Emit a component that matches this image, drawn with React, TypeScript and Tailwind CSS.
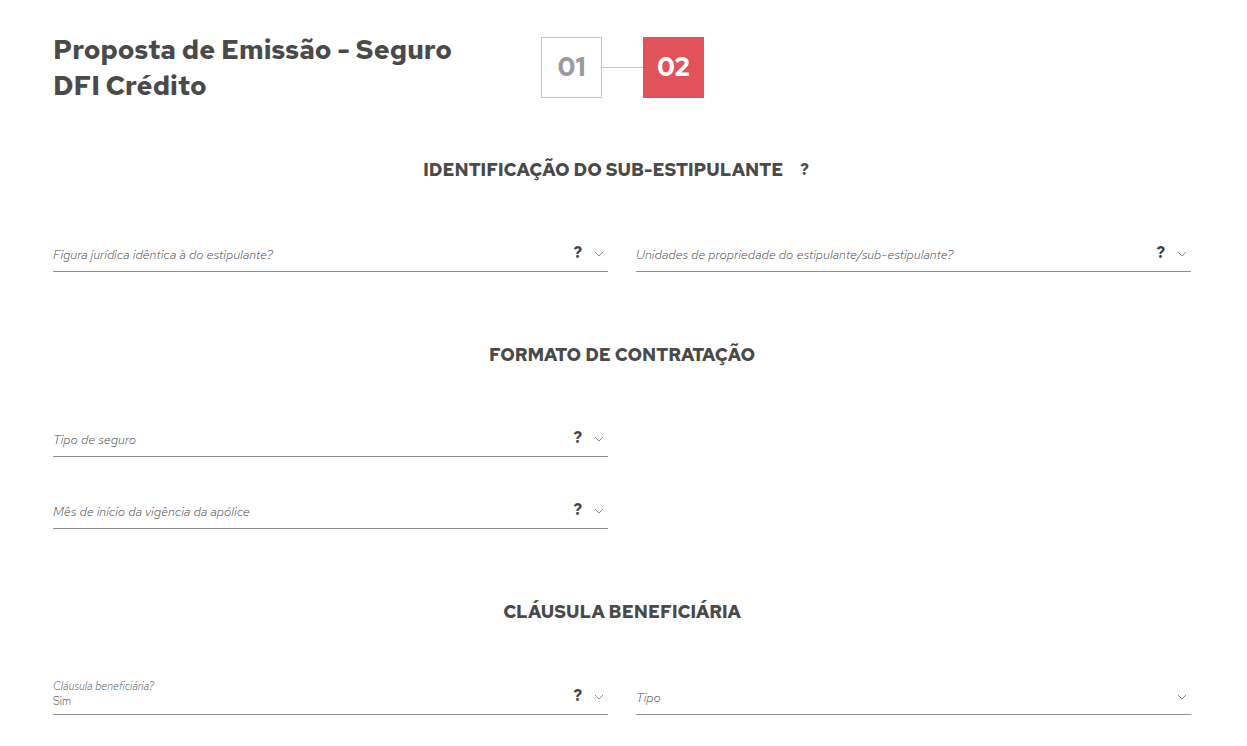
import React from "react";

const Chevron = () => (
  <svg width="10" height="6" viewBox="0 0 10 6" fill="none">
    <path d="M1 1l4 4 4-4" stroke="#888" strokeWidth="1" />
  </svg>
);

function Field({
  label,
  help = true,
  small,
  value,
}: {
  label: string;
  help?: boolean;
  small?: boolean;
  value?: string;
}) {
  return (
    <div className="flex h-[40px] items-end border-b border-[#8f8f8f]">
      <div className="flex h-[18px] w-full items-center mb-[8px]">
        <div className="flex-1 min-w-0">
          {small ? (
            <div className="flex flex-col -translate-y-[3px]">
              <span className="text-[11px] italic font-light leading-[12px] text-[#555]">{label}</span>
              <span className="text-[11px] font-light leading-[14px] text-[#444] mt-[2px]">{value}</span>
            </div>
          ) : (
            <span className="text-[13px] italic font-light leading-[18px] text-[#4a4a4a]">{label}</span>
          )}
        </div>
        <div className="flex items-center gap-[12px] pr-[4px]">
          {help && (
            <span className="text-[16px] font-bold text-[#444] leading-[18px] -translate-y-[1px]">?</span>
          )}
          <Chevron />
        </div>
      </div>
    </div>
  );
}

function Heading({ children, help }: { children: React.ReactNode; help?: boolean }) {
  return (
    <div className="flex justify-center items-center h-[24px]">
      <h2 className="text-[18px] font-extrabold text-[#4a4a4a] leading-[24px] uppercase">{children}</h2>
      {help && <span className="ml-[17px] mr-[12px] text-[16px] font-extrabold text-[#4a4a4a]">?</span>}
    </div>
  );
}

export default function App() {
  return (
    <div
      className="min-h-[746px] bg-white pl-[53px] pr-[56px] pt-[32px]"
      style={{ fontFamily: "'Red Hat Text', Lato, 'Noto Sans', sans-serif" }}
    >
      <div className="flex items-start">
        <h1 className="w-[488px] text-[27px] font-extrabold leading-[36px] text-[#4a4a4a]">
          Proposta de Emissão - Seguro
          <br />
          DFI Crédito
        </h1>
        <div className="flex items-center mt-[5px]">
          <div className="flex h-[61px] w-[61px] items-center justify-center border border-[#c4c4c4] text-[26px] font-extrabold text-[#9a9a9a]">
            01
          </div>
          <div className="h-[1px] w-[41px] bg-[#c4c4c4]" />
          <div className="flex h-[61px] w-[61px] items-center justify-center bg-[#e2525a] text-[26px] font-extrabold text-white">
            02
          </div>
        </div>
      </div>

      <div className="mt-[54px]">
        <Heading help>IDENTIFICAÇÃO DO SUB-ESTIPULANTE</Heading>
      </div>
      <div className="mt-[50px] grid grid-cols-2 gap-x-[28px]">
        <Field label="Figura jurídica idêntica à do estipulante?" />
        <Field label="Unidades de propriedade do estipulante/sub-estipulante?" />
      </div>

      <div className="mt-[71px]">
        <Heading>FORMATO DE CONTRATAÇÃO</Heading>
      </div>
      <div className="mt-[50px] grid grid-cols-2 gap-x-[28px] gap-y-[32px]">
        <Field label="Tipo de seguro" />
        <div />
        <Field label="Mês de início da vigência da apólice" />
      </div>

      <div className="mt-[71px]">
        <Heading>CLÁUSULA BENEFICIÁRIA</Heading>
      </div>
      <div className="mt-[51px] grid grid-cols-2 gap-x-[28px]">
        <Field label="Cláusula beneficiária?" small value="Sim" />
        <Field label="Tipo" help={false} />
      </div>
    </div>
  );
}
